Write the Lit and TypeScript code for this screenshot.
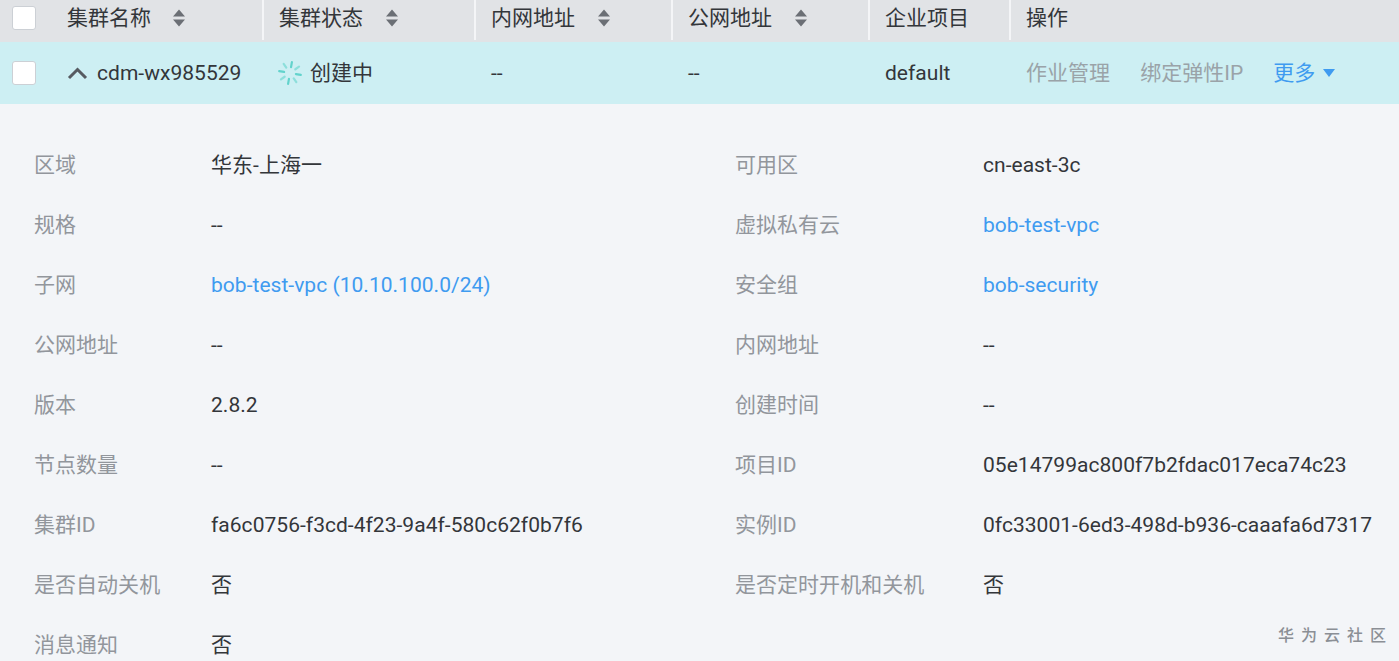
import { LitElement, html, css, nothing } from "lit";
import { customElement } from "lit/decorators.js";

const sort = html`<svg class="sort" width="14" height="20" viewBox="0 0 14 20"><path d="M7 1.5 13 8.5H1Z M1 11.5H13L7 18.5Z" fill="#6b6f75"/></svg>`;
const spinner = html`<svg class="spin" width="26" height="26" viewBox="0 0 26 26" fill="none" stroke="#62d3cc" stroke-width="2.2" stroke-linecap="round">
<g transform="rotate(10 13 13)">
<path d="M13 2V7"/><path opacity=".6" d="M20.8 5.2 17.6 8.4"/><path d="M24 13H19"/><path opacity=".6" d="M20.8 20.8 17.6 17.6"/><path d="M13 24V19"/><path opacity=".6" d="M5.2 20.8 8.4 17.6"/><path d="M2 13H7"/><path opacity=".6" d="M5.2 5.2 8.4 8.4"/>
</g></svg>`;

type V = { t: string; link?: boolean; cjk?: boolean };
const rows: [string, V, string?, V?][] = [
  ["区域", { t: "华东-上海一", cjk: true }, "可用区", { t: "cn-east-3c" }],
  ["规格", { t: "--" }, "虚拟私有云", { t: "bob-test-vpc", link: true }],
  ["子网", { t: "bob-test-vpc (10.10.100.0/24)", link: true }, "安全组", { t: "bob-security", link: true }],
  ["公网地址", { t: "--" }, "内网地址", { t: "--" }],
  ["版本", { t: "2.8.2" }, "创建时间", { t: "--" }],
  ["节点数量", { t: "--" }, "项目ID", { t: "05e14799ac800f7b2fdac017eca74c23" }],
  ["集群ID", { t: "fa6c0756-f3cd-4f23-9a4f-580c62f0b7f6" }, "实例ID", { t: "0fc33001-6ed3-498d-b936-caaafa6d7317" }],
  ["是否自动关机", { t: "否", cjk: true }, "是否定时开机和关机", { t: "否", cjk: true }],
  ["消息通知", { t: "否", cjk: true }],
];

const cls = (v: V) => [v.link ? "link" : "", v.cjk ? "cjk" : ""].join(" ");

@customElement("app-root")
export class AppRoot extends LitElement {
  static styles = css`
    :host {
      display: block;
      position: relative;
      height: 661px;
      overflow: hidden;
      background: #f3f5f8;
      color: #33363a;
      font-family: Roboto, "Noto Sans CJK SC", sans-serif;
      font-size: 21px;
      letter-spacing: 0.03px;
    }
    .grid {
      display: grid;
      grid-template-columns: 51px 211px 212px 197px 197px 141px 1fr;
    }
    .head {
      height: 42px;
      background: #e1e3e6;
      align-items: stretch;
    }
    .hc {
      display: flex;
      align-items: center;
      gap: 22px;
      padding: 0 0 4px 15px;
      border-left: 2px solid #f4f5f7;
      height: 36px;
    }
    .hc.first {
      border-left: 0;
      padding-left: 16px;
      gap: 21px;
    }
    .hc span { line-height: 36px; }
    .sort { flex: none; }
    .box-cell {
      display: flex;
      align-items: center;
      padding-left: 12px;
    }
    .head .box-cell { padding-bottom: 6px; }
    .box {
      width: 24px;
      height: 24px;
      box-sizing: border-box;
      background: #fff;
      border: 1px solid #ccd0d5;
      border-radius: 3px;
    }
    .row {
      height: 62px;
      background: #cdeff3;
      align-items: center;
    }
    .row > div { padding-left: 17px; display: flex; align-items: center; }
    .row > .box-cell { padding-left: 12px; }
    .row .name { gap: 9px; padding-left: 16px; }
    .row .state { gap: 7px; padding-left: 15px; }
    .row .state span { padding-bottom: 4px; }
    .row .ops { padding-left: 17px; gap: 30px; }
    .ops span { padding-bottom: 4px; }
    .muted { color: #9aa3a8; }
    .more { color: #3f9bf0; display: flex; align-items: center; gap: 8px; }
    .more svg { margin-top: 4px; }
    .detail {
      display: grid;
      grid-template-columns: 177px 524px 248px 1fr;
      grid-auto-rows: 60px;
      padding: 31px 0 0 34px;
      align-items: center;
    }
    .label { color: #92969c; padding-bottom: 4px; }
    .cjk { padding-bottom: 4px; }
    .link { color: #3f9bf0; }
    .wm {
      position: absolute;
      right: 6px;
      top: 626px;
      font-size: 16px;
      font-weight: 500;
      letter-spacing: 7px;
      color: #8b8f95;
      line-height: 20px;
      white-space: nowrap;
    }
  `;

  render() {
    return html`
      <div class="grid head">
        <div class="box-cell"><div class="box"></div></div>
        <div class="hc first"><span>集群名称</span>${sort}</div>
        <div class="hc"><span>集群状态</span>${sort}</div>
        <div class="hc"><span>内网地址</span>${sort}</div>
        <div class="hc"><span>公网地址</span>${sort}</div>
        <div class="hc"><span>企业项目</span></div>
        <div class="hc"><span>操作</span></div>
      </div>
      <div class="grid row">
        <div class="box-cell"><div class="box"></div></div>
        <div class="name">
          <svg width="21" height="14" viewBox="0 0 21 14" fill="none" stroke="#565b61" stroke-width="3"><path d="M2 12 10.5 3.5 19 12"/></svg>
          <span>cdm-wx985529</span>
        </div>
        <div class="state">${spinner}<span>创建中</span></div>
        <div>--</div>
        <div>--</div>
        <div>default</div>
        <div class="ops">
          <span class="muted">作业管理</span>
          <span class="muted">绑定弹性IP</span>
          <span class="more">更多<svg width="12" height="8" viewBox="0 0 12 8"><path d="M0 0H12L6 8Z" fill="#3f9bf0"/></svg></span>
        </div>
      </div>
      <div class="detail">
        ${rows.map(
          ([a, b, c, d]) => html`
            <div class="label">${a}</div>
            <div class=${cls(b)}>${b.t}</div>
            ${c && d
              ? html`<div class="label">${c}</div>
                  <div class=${cls(d)}>${d.t}</div>`
              : nothing}
          `
        )}
      </div>
      <div class="wm">华为云社区</div>
    `;
  }
}
